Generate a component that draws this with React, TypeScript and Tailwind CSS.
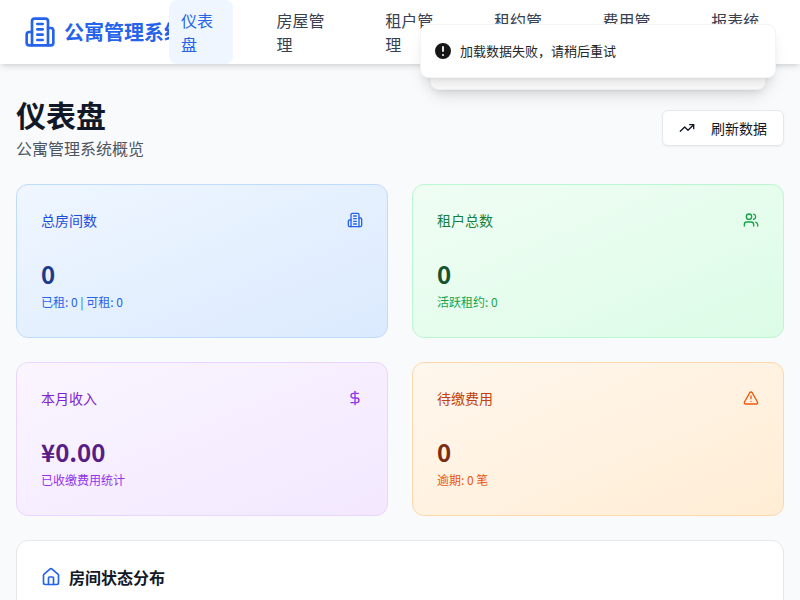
import { DollarSign, House, TrendingUp, TriangleAlert, Users } from 'lucide-react'
import type { ReactNode } from 'react'

const navItems = ['仪表盘', '房屋管理', '租户管理', '租约管理', '费用管理', '报表统计']

function BuildingIcon({ className }: { className: string }) {
  return (
    <svg
      viewBox="0 0 24 24"
      fill="none"
      stroke="currentColor"
      strokeWidth="2"
      strokeLinecap="round"
      strokeLinejoin="round"
      className={className}
    >
      <path d="M6 22V4a2 2 0 0 1 2-2h8a2 2 0 0 1 2 2v18Z" />
      <path d="M6 12H4a2 2 0 0 0-2 2v6a2 2 0 0 0 2 2h2" />
      <path d="M18 9h2a2 2 0 0 1 2 2v9a2 2 0 0 1-2 2h-2" />
      <path d="M10 6h4" />
      <path d="M10 10h4" />
      <path d="M10 14h4" />
      <path d="M10 18h4" />
    </svg>
  )
}

function StatCard({
  label,
  value,
  note,
  icon,
  card,
  labelColor,
  valueColor,
  noteColor,
}: {
  label: string
  value: string
  note: string
  icon: ReactNode
  card: string
  labelColor: string
  valueColor: string
  noteColor: string
}) {
  return (
    <div className={`h-[154px] rounded-xl border bg-gradient-to-br ${card}`}>
      <div className="flex items-center justify-between p-6 pb-2">
        <p className={`text-sm leading-[22px] ${labelColor}`}>{label}</p>
        {icon}
      </div>
      <div className="px-6 pt-[19px]">
        <p className={`text-2xl font-bold ${valueColor}`}>{value}</p>
        <p className={`mt-1 text-xs ${noteColor}`}>{note}</p>
      </div>
    </div>
  )
}

export default function App() {
  return (
    <div className="relative h-screen overflow-hidden bg-[#f9fafb] font-['Noto_Sans_CJK_SC',sans-serif]">
      <header className="flex h-16 bg-white px-6 shadow-md">
        <div className="flex w-[145px] shrink-0 items-center">
          <BuildingIcon className="mr-2 h-8 w-8 shrink-0 text-[#2563eb]" />
          <span className="whitespace-nowrap text-xl font-bold text-[#2563eb]">公寓管理系统</span>
        </div>
        <nav className="flex min-w-0 flex-1 items-center gap-8">
          {navItems.map((item, index) => (
            <a
              key={item}
              className={`rounded-lg px-3 py-2 text-base ${
                index === 0 ? 'bg-[#eff6ff] text-[#2563eb]' : 'text-[#374151]'
              }`}
            >
              {item}
            </a>
          ))}
        </nav>
      </header>

      <main className="px-4 pt-8">
        <div className="mb-6 flex items-center justify-between">
          <div>
            <h1 className="text-3xl font-bold text-[#111827]">仪表盘</h1>
            <p className="mt-1 text-base text-[#4b5563]">公寓管理系统概览</p>
          </div>
          <button className="flex h-9 items-center gap-4 rounded-md border border-[#e5e7eb] bg-white px-4 text-sm text-[#111827] shadow-xs">
            <TrendingUp className="h-4 w-4" />
            刷新数据
          </button>
        </div>

        <div className="grid grid-cols-2 gap-6">
          <StatCard
            label="总房间数"
            value="0"
            note="已租: 0 | 可租: 0"
            icon={<BuildingIcon className="h-4 w-4 text-[#2563eb]" />}
            card="border-[#bfdbfe] from-[#eff6ff] to-[#dbeafe]"
            labelColor="text-[#1d4ed8]"
            valueColor="text-[#1e3a8a]"
            noteColor="text-[#2563eb]"
          />
          <StatCard
            label="租户总数"
            value="0"
            note="活跃租约: 0"
            icon={<Users className="h-4 w-4 text-[#16a34a]" />}
            card="border-[#bbf7d0] from-[#f0fdf4] to-[#dcfce7]"
            labelColor="text-[#15803d]"
            valueColor="text-[#14532d]"
            noteColor="text-[#16a34a]"
          />
          <StatCard
            label="本月收入"
            value="¥0.00"
            note="已收缴费用统计"
            icon={<DollarSign className="h-4 w-4 text-[#9333ea]" />}
            card="border-[#e9d5ff] from-[#faf5ff] to-[#f3e8ff]"
            labelColor="text-[#7e22ce]"
            valueColor="text-[#581c87]"
            noteColor="text-[#9333ea]"
          />
          <StatCard
            label="待缴费用"
            value="0"
            note="逾期: 0 笔"
            icon={<TriangleAlert className="h-4 w-4 text-[#ea580c]" />}
            card="border-[#fed7aa] from-[#fff7ed] to-[#ffedd5]"
            labelColor="text-[#c2410c]"
            valueColor="text-[#7c2d12]"
            noteColor="text-[#ea580c]"
          />
        </div>

        <div className="mt-6 h-[300px] rounded-xl border border-[#e5e7eb] bg-white p-6">
          <div className="flex items-center gap-2">
            <House className="h-5 w-5 text-[#2563eb]" />
            <h2 className="text-base font-semibold text-[#111827]">房间状态分布</h2>
          </div>
        </div>
      </main>

      {/* stacked toasts */}
      <div className="absolute left-[430px] top-[40px] h-[50px] w-[336px] rounded-lg border border-[#f3f4f6] bg-white shadow-lg" />
      <div className="absolute left-[420px] top-[24px] flex h-[54px] w-[356px] items-center gap-[7px] rounded-lg border border-[#f3f4f6] bg-white px-3 shadow-lg">
        <svg viewBox="0 0 20 20" className="h-5 w-5 shrink-0 text-[#171717]" fill="currentColor">
          <path
            fillRule="evenodd"
            clipRule="evenodd"
            d="M18 10a8 8 0 1 1-16 0 8 8 0 0 1 16 0Zm-8-5a.9.9 0 0 0-.9.9v4.2a.9.9 0 0 0 1.8 0V5.9A.9.9 0 0 0 10 5Zm0 10a1 1 0 1 0 0-2 1 1 0 0 0 0 2Z"
          />
        </svg>
        <span className="text-[13px] text-[#262626]">加载数据失败，请稍后重试</span>
      </div>
    </div>
  )
}
